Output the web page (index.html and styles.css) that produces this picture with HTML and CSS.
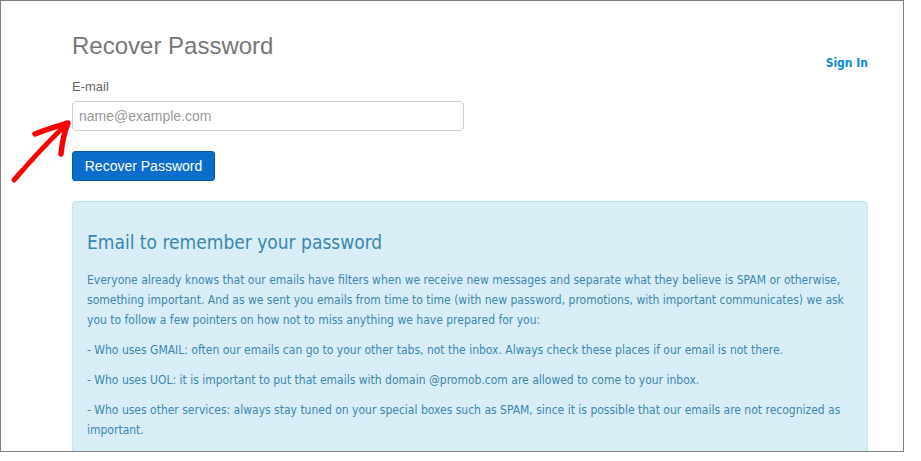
FILE: index.html
```html
<!DOCTYPE html>
<html>
<head>
<meta charset="utf-8">
<title>Recover Password</title>
<link rel="stylesheet" href="styles.css">
</head>
<body>
<div class="frame">
  <div class="page">
    <div class="header">
      <h1 class="title">Recover Password</h1>
      <a class="signin" href="#">Sign In</a>
    </div>
    <label class="label" for="email">E-mail</label>
    <input class="input" id="email" type="text" placeholder="name@example.com">
    <button class="btn" type="button">Recover Password</button>
    <div class="alert">
      <h4 class="alert-title">Email to remember your password</h4>
      <p class="alert-text">Everyone already knows that our emails have filters when we receive new messages and separate what they believe is SPAM or otherwise, something important. And as we sent you emails from time to time (with new password, promotions, with important communicates) we ask you to follow a few pointers on how not to miss anything we have prepared for you:</p>
      <p class="alert-text">- Who uses GMAIL: often our emails can go to your other tabs, not the inbox. Always check these places if our email is not there.</p>
      <p class="alert-text">- Who uses UOL: it is important to put that emails with domain @promob.com are allowed to come to your inbox.</p>
      <p class="alert-text">- Who uses other services: always stay tuned on your special boxes such as SPAM, since it is possible that our emails are not recognized as important.</p>
    </div>
  </div>
  <svg class="arrow" width="80" height="100" viewBox="0 0 80 100">
    <path d="M13 89 C 28 72, 45 52, 66 33" fill="none" stroke="#f00" stroke-width="5" stroke-linecap="round"/>
    <path d="M34 43 C 46 38, 57 35, 67 32 C 63 42, 61 52, 60 63" fill="none" stroke="#f00" stroke-width="5.5" stroke-linecap="round" stroke-linejoin="round"/>
  </svg>
</div>
</body>
</html>
```
FILE: styles.css
```css
html, body {
  margin: 0;
  padding: 0;
  background: #fff;
}
.frame {
  position: relative;
  width: 904px;
  height: 452px;
  box-sizing: border-box;
  border: 1px solid #808080;
  overflow: hidden;
  background: #fff;
}
.page {
  width: 796px;
  margin-left: 71px;
  padding-top: 30px;
}
.header {
  display: flex;
  justify-content: space-between;
  align-items: flex-start;
}
.title {
  margin: 0;
  font-family: "Liberation Sans", Arial, sans-serif;
  font-size: 24px;
  line-height: 30px;
  font-weight: normal;
  color: #777;
}
.signin {
  margin-top: 22px;
  font-family: "DejaVu Sans Condensed", "DejaVu Sans", sans-serif;
  font-size: 12px;
  line-height: 20px;
  font-weight: bold;
  color: #0e8ad3;
  text-decoration: none;
}
.label {
  display: block;
  margin-top: 4px;
  font-family: "Liberation Sans", Arial, sans-serif;
  font-size: 13px;
  line-height: 20px;
  color: #666;
}
.input {
  display: block;
  margin-top: 4px;
  width: 392px;
  height: 30px;
  box-sizing: border-box;
  border: 1px solid #ccc;
  border-radius: 4px;
  padding: 0 6px;
  font-family: "Liberation Sans", Arial, sans-serif;
  font-size: 14px;
  color: #333;
  outline: none;
}
.input::placeholder {
  color: #999;
}
.btn {
  display: block;
  margin-top: 20px;
  width: 143px;
  height: 30px;
  box-sizing: border-box;
  border: 1px solid #0559a8;
  border-radius: 3px;
  background: #0a6dcc;
  color: #fff;
  font-family: "Liberation Sans", Arial, sans-serif;
  font-size: 14px;
  padding: 0;
}
.alert {
  margin-top: 20px;
  background: #d9edf7;
  border: 1px solid #bce8f1;
  border-radius: 4px;
  padding: 14px 14px 14px 14px;
  color: #3a87ad;
  font-family: "DejaVu Sans Condensed", "DejaVu Sans", sans-serif;
}
.alert-title {
  margin: 16px 0 18px;
  font-size: 19px;
  line-height: 20px;
  font-weight: normal;
}
.alert-text {
  margin: 0 0 10px;
  font-size: 12px;
  line-height: 20px;
}
.arrow {
  position: absolute;
  left: 0;
  top: 90px;
}
```
